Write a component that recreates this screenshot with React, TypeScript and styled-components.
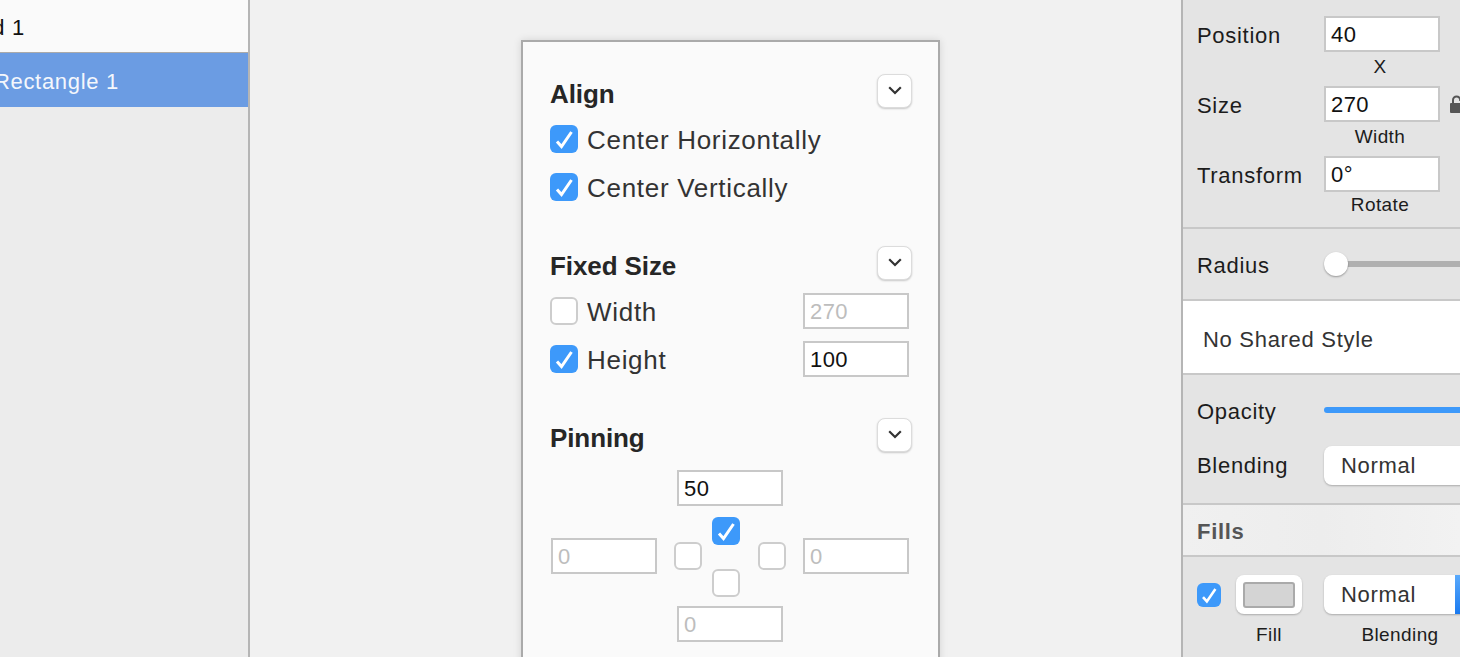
import React from 'react';
import styled, { createGlobalStyle } from 'styled-components';

const GlobalStyle = createGlobalStyle`
  html, body {
    margin: 0;
    padding: 0;
    height: 100%;
    overflow: hidden;
    background: #f1f1f1;
    font-family: "Liberation Sans", Arial, sans-serif;
  }
`;

const Page = styled.div`
  display: flex;
  width: 1460px;
  height: 657px;
  overflow: hidden;
`;

/* layer list */
const LayerList = styled.aside`
  flex: 0 0 250px;
  box-sizing: border-box;
  border-right: 2px solid #b5b5b5;
  background: #ececec;
  overflow: hidden;
`;

const LayerRow = styled.div<{ $selected?: boolean; $end: number }>`
  display: flex;
  justify-content: flex-end;
  align-items: center;
  box-sizing: border-box;
  height: ${({ $selected }) => ($selected ? '54px' : '53px')};
  padding-top: 3px;
  padding-right: ${({ $end }) => $end}px;
  white-space: nowrap;
  font-size: 22px;
  letter-spacing: 0.7px;
  background: ${({ $selected }) => ($selected ? '#6b9ce3' : '#fafafa')};
  color: ${({ $selected }) => ($selected ? '#f4f7fc' : '#111')};
  border-bottom: ${({ $selected }) => ($selected ? 'none' : '1px solid #aaa')};
`;

/* canvas + card */
const Canvas = styled.main`
  flex: 1;
  padding: 40px 0 0 271px;
  overflow: hidden;
`;

const Card = styled.section`
  box-sizing: border-box;
  width: 419px;
  height: 700px;
  padding: 32px 26px 0 27px;
  border: 2px solid #aaa;
  background: #fafafa;
  box-shadow: 0 0 8px rgba(0, 0, 0, 0.12);
  color: #333;
`;

const Section = styled.div`
  height: 172px;
`;

const SectionHeader = styled.div<{ $after: number }>`
  display: flex;
  justify-content: space-between;
  height: 34px;
  margin-bottom: ${({ $after }) => $after}px;
`;

const SectionTitle = styled.h3`
  margin: 0;
  padding-top: 5px;
  font-size: 26px;
  line-height: 30px;
  font-weight: 700;
  letter-spacing: -0.1px;
  color: #262626;
`;

const DisclosureButton = styled.button`
  display: flex;
  align-items: center;
  justify-content: center;
  box-sizing: border-box;
  width: 35px;
  height: 34px;
  padding: 0 0 2px;
  background: #fff;
  border: 1px solid #dcdcdc;
  border-radius: 8px;
  box-shadow: 0 1px 2px rgba(0, 0, 0, 0.2);
`;

const CheckRow = styled.label<{ $after?: number }>`
  display: flex;
  align-items: center;
  gap: 9px;
  height: 28px;
  margin-bottom: ${({ $after }) => $after ?? 0}px;
  padding-right: 3px;
  font-size: 26px;
  line-height: 30px;
  letter-spacing: 0.7px;
`;

const CheckText = styled.span`
  padding-top: 2px;
`;

const RowSpacer = styled.span`
  flex: 1;
`;

const Box = styled.span<{ $checked?: boolean; $small?: boolean }>`
  display: flex;
  flex: none;
  box-sizing: border-box;
  width: ${({ $small }) => ($small ? 24 : 28)}px;
  height: ${({ $small }) => ($small ? 24 : 28)}px;
  border-radius: 6px;
  background: ${({ $checked }) => ($checked ? '#3d99fa' : '#fff')};
  border: ${({ $checked }) => ($checked ? 'none' : '2px solid #cdcdcd')};
`;

const Field = styled.div<{ $muted?: boolean; $wide?: boolean }>`
  box-sizing: border-box;
  flex: none;
  width: ${({ $wide }) => ($wide ? 116 : 106)}px;
  height: 36px;
  padding-left: 5px;
  background: #fff;
  border: 2px solid #c8c8c8;
  font-size: 22px;
  line-height: 34px;
  letter-spacing: 0.4px;
  color: ${({ $muted }) => ($muted ? '#bdbdbd' : '#111')};
`;

const PinGrid = styled.div`
  display: flex;
  flex-direction: column;
  align-items: center;
  width: 358px;
  margin-left: 1px;
`;

const PinMiddle = styled.div`
  display: flex;
  align-items: flex-start;
  width: 100%;
  margin: 11px 0 9px;
`;

const PinSide = styled.div`
  display: flex;
  align-items: center;
  height: 78px;
`;

const PinCross = styled.div`
  display: flex;
  flex-direction: column;
  gap: 24px;
  margin: 0 18px 0 10px;
`;

const PinBox = styled(Box)`
  margin-left: 17px;
`;

const PinBoxRight = styled(Box)`
  margin-right: 17px;
`;

/* inspector */
const Inspector = styled.aside`
  flex: 0 0 279px;
  box-sizing: border-box;
  border-left: 2px solid #b5b5b5;
  background: #e4e4e4;
  color: #1c1c1c;
  font-size: 22px;
  letter-spacing: 0.7px;
  overflow: hidden;
`;

const Group = styled.div<{ $h: number; $pad?: number }>`
  box-sizing: border-box;
  height: ${({ $h }) => $h}px;
  padding: ${({ $pad }) => $pad ?? 0}px 0 0 14px;
  border-bottom: 2px solid #c8c8c8;
`;

const PropRow = styled.div<{ $h?: number }>`
  display: flex;
  align-items: center;
  height: ${({ $h }) => $h ?? 36}px;
`;

const PropLabel = styled.span<{ $top?: number }>`
  flex: 0 0 127px;
  padding-top: ${({ $top }) => $top ?? 3}px;
`;

const Caption = styled.div<{ $top?: number }>`
  width: 112px;
  margin-left: 127px;
  height: 34px;
  padding-top: ${({ $top }) => $top ?? 3}px;
  box-sizing: border-box;
  text-align: center;
  font-size: 19px;
  line-height: 24px;
  letter-spacing: 0.4px;
`;

const LockIcon = styled.svg`
  flex: none;
  margin-left: 10px;
`;

const Track = styled.div<{ $blue?: boolean }>`
  position: relative;
  flex: none;
  width: 200px;
  height: 6px;
  margin-top: -2px;
  border-radius: 3px 0 0 3px;
  background: ${({ $blue }) => ($blue ? '#3d99fa' : '#b0b0b0')};
`;

const Knob = styled.span`
  position: absolute;
  left: 0;
  top: -9px;
  width: 24px;
  height: 24px;
  border-radius: 50%;
  background: #fff;
  box-shadow: 0 1px 2px rgba(0, 0, 0, 0.35);
`;

const SharedStyle = styled.div`
  display: flex;
  align-items: center;
  box-sizing: border-box;
  height: 74px;
  padding: 5px 0 0 20px;
  background: #fff;
  border-bottom: 2px solid #c8c8c8;
  color: #333;
`;

const SelectBox = styled.div<{ $w: number }>`
  display: flex;
  flex: none;
  box-sizing: border-box;
  width: ${({ $w }) => $w}px;
  height: 39px;
  background: #fff;
  border-radius: 8px;
  box-shadow: 0 1px 2px rgba(0, 0, 0, 0.25);
  color: #333;
  overflow: hidden;
`;

const SelectText = styled.span`
  flex: 1;
  padding-left: 17px;
  line-height: 39px;
`;

const SelectArrow = styled.span`
  flex: 0 0 21px;
  background: linear-gradient(#5aaafc, #1a7af0);
`;

const GroupHeader = styled.div`
  box-sizing: border-box;
  height: 52px;
  padding-left: 14px;
  background: linear-gradient(90deg, #f0f0f0, #ededed 50%, #f2f2f2);
  border-bottom: 2px solid #c8c8c8;
  color: #555;
  font-weight: 700;
  line-height: 53px;
`;

const FillRow = styled.div`
  display: flex;
  align-items: flex-start;
  padding: 18px 0 0 14px;
`;

const FillColumn = styled.div<{ $left: number }>`
  display: flex;
  flex-direction: column;
  align-items: center;
  margin-left: ${({ $left }) => $left}px;
`;

const FillCheck = styled.div`
  padding-top: 8px;
`;

const FillCaption = styled.span`
  margin-top: 9px;
  font-size: 19px;
  line-height: 24px;
  letter-spacing: 0.4px;
`;

const SwatchFrame = styled.div`
  display: flex;
  align-items: center;
  justify-content: center;
  box-sizing: border-box;
  width: 66px;
  height: 39px;
  background: #fff;
  border-radius: 8px;
  box-shadow: 0 1px 2px rgba(0, 0, 0, 0.25);
`;

const Swatch = styled.span`
  box-sizing: border-box;
  width: 52px;
  height: 26px;
  background: #d4d4d4;
  border: 2px solid #aaa;
  border-radius: 3px;
`;

const CheckMark = ({ small }: { small?: boolean }) => (
  <svg width={small ? 24 : 28} height={small ? 24 : 28} viewBox="0 0 28 28" fill="none">
    <path d="M7 16.5l4.5 5L21.5 7" stroke="#fff" strokeWidth="3" />
  </svg>
);

const Chevron = () => (
  <svg width="14" height="9" viewBox="0 0 14 9" fill="none">
    <path d="M1.2 1.2L7 7l5.8-5.8" stroke="#333" strokeWidth="2.2" />
  </svg>
);

const Check = ({ checked, small }: { checked?: boolean; small?: boolean }) => (
  <Box $checked={checked} $small={small}>
    {checked && <CheckMark small={small} />}
  </Box>
);

export default function App() {
  return (
    <Page>
      <GlobalStyle />
      <LayerList>
        <LayerRow $end={223}>Artboard 1</LayerRow>
        <LayerRow $selected $end={129}>Rectangle 1</LayerRow>
      </LayerList>

      <Canvas>
        <Card>
          <Section>
            <SectionHeader $after={17}>
              <SectionTitle>Align</SectionTitle>
              <DisclosureButton><Chevron /></DisclosureButton>
            </SectionHeader>
            <CheckRow $after={20}><Check checked /><CheckText>Center Horizontally</CheckText></CheckRow>
            <CheckRow><Check checked /><CheckText>Center Vertically</CheckText></CheckRow>
          </Section>

          <Section>
            <SectionHeader $after={17}>
              <SectionTitle>Fixed Size</SectionTitle>
              <DisclosureButton><Chevron /></DisclosureButton>
            </SectionHeader>
            <CheckRow $after={20}>
              <Check /><CheckText>Width</CheckText><RowSpacer /><Field $muted>270</Field>
            </CheckRow>
            <CheckRow>
              <Check checked /><CheckText>Height</CheckText><RowSpacer /><Field>100</Field>
            </CheckRow>
          </Section>

          <Section>
            <SectionHeader $after={18}>
              <SectionTitle>Pinning</SectionTitle>
              <DisclosureButton><Chevron /></DisclosureButton>
            </SectionHeader>
            <PinGrid>
              <Field>50</Field>
              <PinMiddle>
                <PinSide>
                  <Field $muted>0</Field>
                  <PinBox />
                </PinSide>
                <PinCross>
                  <Check checked />
                  <Check />
                </PinCross>
                <PinSide>
                  <PinBoxRight />
                  <Field $muted>0</Field>
                </PinSide>
              </PinMiddle>
              <Field $muted>0</Field>
            </PinGrid>
          </Section>
        </Card>
      </Canvas>

      <Inspector>
        <Group $h={229} $pad={16}>
          <PropRow><PropLabel>Position</PropLabel><Field $wide>40</Field></PropRow>
          <Caption>X</Caption>
          <PropRow>
            <PropLabel>Size</PropLabel>
            <Field $wide>270</Field>
            <LockIcon width="12" height="20" viewBox="0 0 12 20" fill="none">
              <path d="M3 10V6a3.6 3.6 0 0 1 7.2 0v1" stroke="#555" strokeWidth="2" />
              <rect x="0" y="9" width="11" height="10" rx="1" fill="#555" />
            </LockIcon>
          </PropRow>
          <Caption>Width</Caption>
          <PropRow><PropLabel>Transform</PropLabel><Field $wide>0°</Field></PropRow>
          <Caption $top={1}>Rotate</Caption>
        </Group>

        <Group $h={72} $pad={1}>
          <PropRow $h={70}>
            <PropLabel $top={1}>Radius</PropLabel>
            <Track><Knob /></Track>
          </PropRow>
        </Group>

        <SharedStyle>No Shared Style</SharedStyle>

        <Group $h={130} $pad={9}>
          <PropRow $h={54}>
            <PropLabel $top={1}>Opacity</PropLabel>
            <Track $blue />
          </PropRow>
          <PropRow $h={54}>
            <PropLabel $top={1}>Blending</PropLabel>
            <SelectBox $w={200}><SelectText>Normal</SelectText></SelectBox>
          </PropRow>
        </Group>

        <GroupHeader>Fills</GroupHeader>

        <FillRow>
          <FillCheck><Check checked small /></FillCheck>
          <FillColumn $left={15}>
            <SwatchFrame><Swatch /></SwatchFrame>
            <FillCaption>Fill</FillCaption>
          </FillColumn>
          <FillColumn $left={22}>
            <SelectBox $w={152}>
              <SelectText>Normal</SelectText>
              <SelectArrow />
            </SelectBox>
            <FillCaption>Blending</FillCaption>
          </FillColumn>
        </FillRow>
      </Inspector>
    </Page>
  );
}
